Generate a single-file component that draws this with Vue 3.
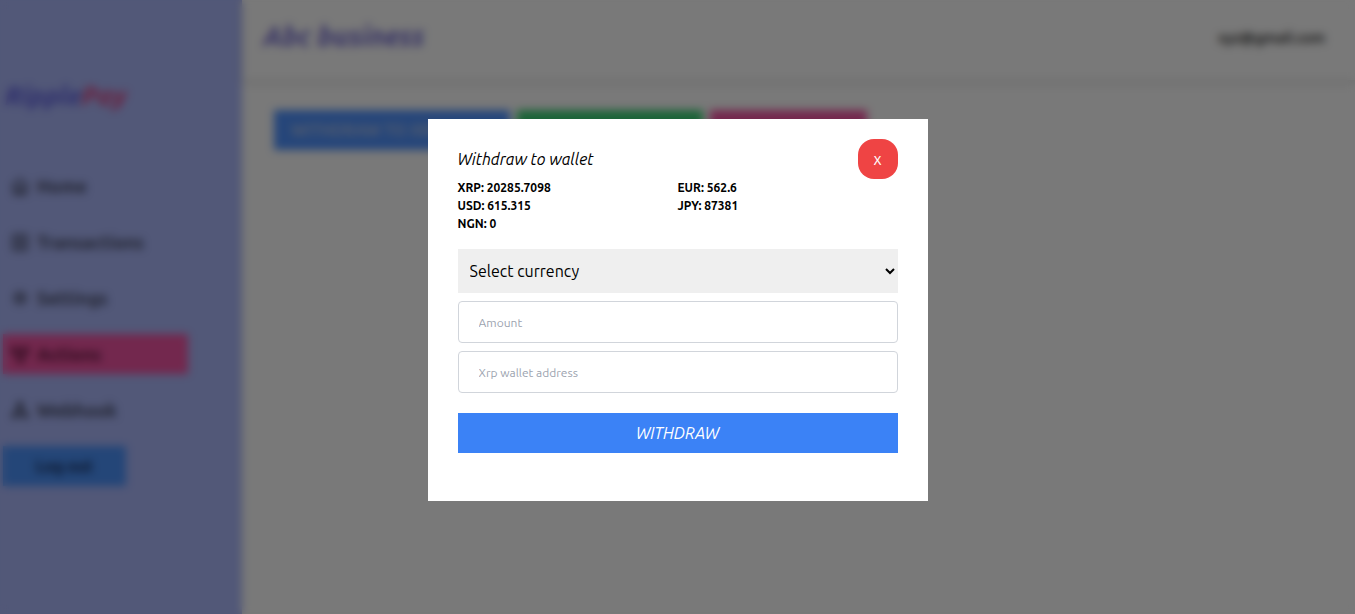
<script setup>
import { ref } from 'vue'

const currency = ref('')
const amount = ref('')
const address = ref('')

const balances = [
  ['XRP', '20285.7098'],
  ['EUR', '562.6'],
  ['USD', '615.315'],
  ['JPY', '87381'],
  ['NGN', '0'],
]
</script>

<template>
  <div class="page">
    <div class="shell" inert>
      <aside class="sidebar">
        <div class="logo">Ripple<span>Pay</span></div>
        <nav class="nav">
          <a href="#" class="item">
            <svg viewBox="0 0 20 20" class="icon line"><path d="M2 10 10 3l8 7M4 9v9h12V9M8 18v-6h4v6" /></svg>
            Home
          </a>
          <a href="#" class="item">
            <svg viewBox="0 0 20 20" class="icon line"><rect x="3" y="3" width="14" height="15" rx="1" /><path d="M6 7h8M6 10.500h8M6 14h8" /></svg>
            Transactions
          </a>
          <a href="#" class="item">
            <svg viewBox="0 0 20 20" class="icon line"><circle cx="10" cy="10" r="3" /><circle cx="10" cy="10" r="6" stroke-dasharray="3 1.700" /></svg>
            Settings
          </a>
          <a href="#" class="item active">
            <svg viewBox="0 0 20 20" class="icon line"><path d="M2 4h5v5H2zM13 4h5v5h-5zM8 13h5v5H8zM7 6h6M5 9l4 4M15 9l-3 4" /></svg>
            Actions
          </a>
          <a href="#" class="item">
            <svg viewBox="0 0 20 20" class="icon solid"><path d="M7 2h6v7h-2v2h5l3 7h-7v-5H8v5H1l3-7h5V9H7z" /></svg>
            Webhook
          </a>
          <button type="button" class="logout">Log out</button>
        </nav>
      </aside>
      <main class="main">
        <header class="topbar">
          <h1>Abc business</h1>
          <span class="email">xyz@gmail.com</span>
        </header>
        <div class="actions">
          <button type="button" class="action blue">WITHDRAW TO XRP</button>
          <button type="button" class="action green"></button>
          <button type="button" class="action pink"></button>
        </div>
      </main>
    </div>

    <div class="overlay">
      <form class="modal" role="dialog" aria-labelledby="modal-title" @submit.prevent>
        <div class="modal-head">
          <h2 id="modal-title">Withdraw to wallet</h2>
          <button type="button" class="close">x</button>
        </div>
        <div class="balances">
          <span v-for="[code, value] in balances" :key="code">{{ code }}: {{ value }}</span>
        </div>
        <select v-model="currency" aria-label="Select currency">
          <option value="">Select currency</option>
        </select>
        <input v-model="amount" type="text" placeholder="Amount" aria-label="Amount" />
        <input v-model="address" type="text" placeholder="Xrp wallet address" aria-label="Xrp wallet address" />
        <button type="submit" class="submit">WITHDRAW</button>
      </form>
    </div>
  </div>
</template>

<style>
body {
  margin: 0;
}
</style>

<style scoped>
* {
  box-sizing: border-box;
}
.page {
  position: relative;
  min-height: 100vh;
  font-family: Ubuntu, "Noto Sans", "Open Sans", sans-serif;
  font-size: 16px;
  line-height: 24px;
  color: #000;
}
button,
input,
select {
  font: inherit;
  border: 0;
  margin: 0;
}
h1,
h2 {
  margin: 0;
}
.shell {
  display: flex;
  min-height: 100vh;
  background: #f2f2f2;
}
.sidebar {
  width: 242px;
  flex: none;
  padding: 80px 3px 0;
  background: #a4b0f0;
}
.logo {
  padding-left: 2px;
  font-size: 26px;
  line-height: 32px;
  font-weight: 700;
  font-style: italic;
  color: #5858d8;
}
.logo span {
  color: #d43c78;
}
.nav {
  display: flex;
  flex-direction: column;
  align-items: flex-start;
  gap: 16px;
  margin-top: 54px;
}
.item {
  display: flex;
  align-items: center;
  gap: 7px;
  width: 185px;
  height: 40px;
  padding-left: 7px;
  font-size: 18px;
  font-weight: 700;
  color: #40445c;
  text-decoration: none;
}
.item.active {
  background: #e6509c;
  color: #581438;
}
.icon {
  width: 20px;
  height: 20px;
}
.line {
  fill: none;
  stroke: currentColor;
  stroke-width: 2;
}
.solid {
  fill: currentColor;
}
.logout {
  width: 123px;
  height: 40px;
  font-weight: 700;
  background: #488cf0;
  color: #142850;
}
.main {
  flex: 1;
}
.topbar {
  display: flex;
  align-items: center;
  justify-content: space-between;
  height: 80px;
  padding: 0 30px 4px 21px;
  box-shadow: 0 2px 6px rgba(0, 0, 0, 0.16);
}
h1 {
  padding-bottom: 4px;
  font-size: 27px;
  line-height: 32px;
  font-style: italic;
  color: #6860c8;
}
.email {
  font-size: 15px;
  font-weight: 500;
}
.actions {
  display: flex;
  gap: 7px;
  padding: 30px 32px;
}
.action {
  height: 40px;
  padding: 0 17px;
  text-align: left;
  white-space: nowrap;
  overflow: hidden;
  font-weight: 700;
  color: #a4b8e0;
}
.blue {
  width: 236px;
  background: #4c8cf4;
}
.green {
  width: 186px;
  background: #38c870;
}
.pink {
  width: 157px;
  background: #e8509c;
}
.overlay {
  position: absolute;
  inset: 0;
  display: flex;
  align-items: flex-start;
  justify-content: center;
  padding-top: 119px;
  background: rgba(0, 0, 0, 0.5);
  backdrop-filter: blur(4px);
}
.modal {
  display: flex;
  flex-direction: column;
  gap: 8px;
  width: 500px;
  max-width: 100%;
  padding: 20px 30px 48px;
  background: #fff;
}
.modal-head {
  display: flex;
  align-items: center;
  justify-content: space-between;
}
h2 {
  font-size: 16px;
  font-weight: 400;
  font-style: italic;
}
.close {
  width: 40px;
  height: 40px;
  padding: 0;
  border-radius: 16px;
  background: #ef4444;
  color: #fff;
}
.balances {
  display: grid;
  grid-template-columns: 1fr 1fr;
  margin: -8px 0 8px;
  font-size: 12px;
  line-height: 18px;
  font-weight: 700;
}
select {
  height: 44px;
  padding: 0 8px;
  border-radius: 0;
  background: #efefef;
  color: #000;
}
input {
  height: 42px;
  padding: 0 20px;
  border: 1px solid #d1d5db;
  border-radius: 4px;
  font-size: 12px;
  background: #fff;
}
input::placeholder {
  color: #9ca3af;
  opacity: 1;
}
.submit {
  height: 40px;
  margin-top: 12px;
  font-style: italic;
  background: #3b82f6;
  color: #fff;
}
</style>
